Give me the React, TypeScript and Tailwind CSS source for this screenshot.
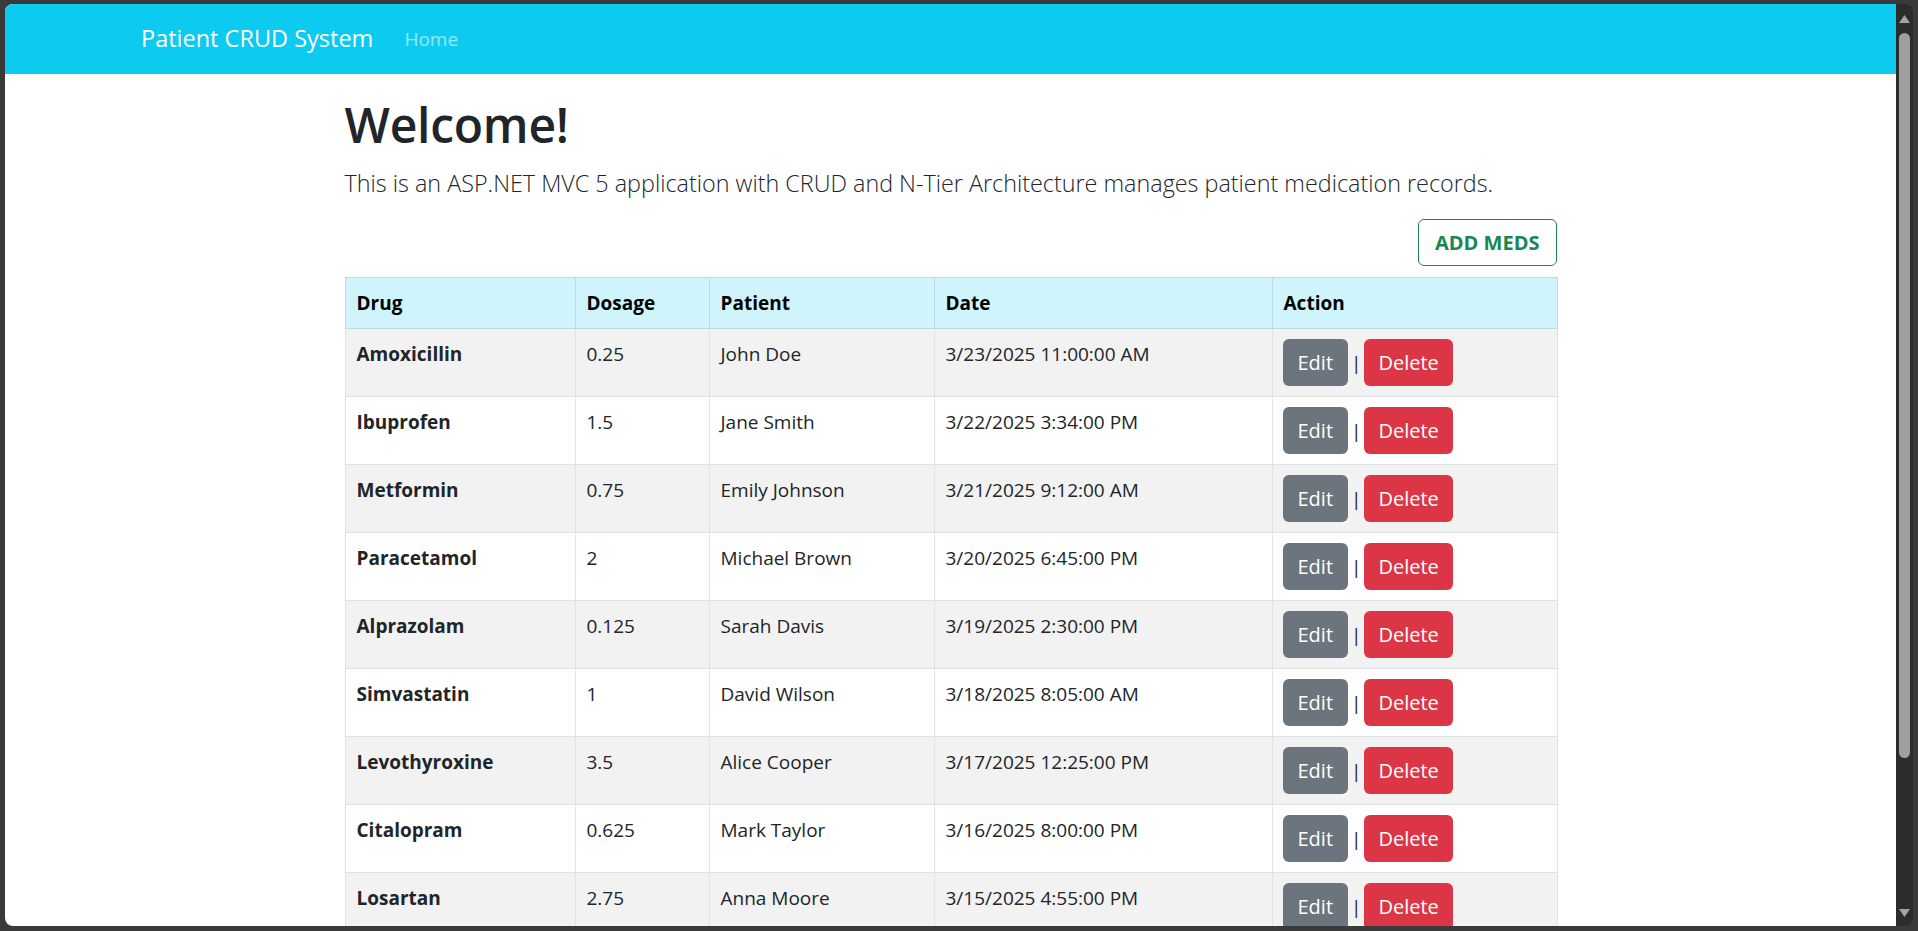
import { useState } from "react";

type Med = {
    drug: string;
    dosage: string;
    patient: string;
    date: string;
};

const meds: Med[] = [
    { drug: "Amoxicillin", dosage: "0.25", patient: "John Doe", date: "3/23/2025 11:00:00 AM" },
    { drug: "Ibuprofen", dosage: "1.5", patient: "Jane Smith", date: "3/22/2025 3:34:00 PM" },
    { drug: "Metformin", dosage: "0.75", patient: "Emily Johnson", date: "3/21/2025 9:12:00 AM" },
    { drug: "Paracetamol", dosage: "2", patient: "Michael Brown", date: "3/20/2025 6:45:00 PM" },
    { drug: "Alprazolam", dosage: "0.125", patient: "Sarah Davis", date: "3/19/2025 2:30:00 PM" },
    { drug: "Simvastatin", dosage: "1", patient: "David Wilson", date: "3/18/2025 8:05:00 AM" },
    { drug: "Levothyroxine", dosage: "3.5", patient: "Alice Cooper", date: "3/17/2025 12:25:00 PM" },
    { drug: "Citalopram", dosage: "0.625", patient: "Mark Taylor", date: "3/16/2025 8:00:00 PM" },
    { drug: "Losartan", dosage: "2.75", patient: "Anna Moore", date: "3/15/2025 4:55:00 PM" },
];

const Navbar = () => {
    return (
        <div className="h-[70px] bg-[#0dcaf0] flex items-center pl-[136px]">
            <span className="text-white text-[23.5px]">Patient CRUD System</span>
            <span className="ml-[31px] text-[19px] text-white/55">Home</span>
        </div>
    );
};

const Scrollbar = () => {
    return (
        <div className="w-[17px] bg-[#2c2c2c] rounded-r-lg flex flex-col items-center pt-[11px] pb-[9px]">
            <svg width="11" height="8" viewBox="0 0 11 8">
                <path d="M5.5 0 L11 8 L0 8 Z" fill="#a3a3a3" />
            </svg>
            <div className="mt-[10px] w-[11px] h-[725px] rounded-full bg-[#9f9f9f]" />
            <div className="flex-1" />
            <svg width="11" height="8" viewBox="0 0 11 8">
                <path d="M0 0 L11 0 L5.5 8 Z" fill="#a3a3a3" />
            </svg>
        </div>
    );
};

export default function App() {
    const [rows] = useState(meds);

    return (
        <div className="w-[1918px] h-[931px] bg-[#3a3a3a] pt-[4px] pb-[5px] px-[5px] flex font-['Open_Sans',sans-serif]">
            <div className="w-[1891px] h-full bg-white rounded-l-lg overflow-hidden">
                <Navbar />
                <div className="w-[1212px] mx-auto">
                    <h1 className="mt-[21px] text-[48px] leading-[60px] font-semibold tracking-[-0.005em] text-[#212529]">Welcome!</h1>
                    <p className="mt-[13px] text-[23.35px] leading-[30px] font-light text-[#212529]">
                        This is an ASP.NET MVC 5 application with CRUD and N-Tier Architecture manages patient medication records.
                    </p>
                    <div className="flex justify-end mt-[21px] mb-[11px]">
                        <button className="h-[47px] px-[16px] border border-[#198754] rounded-md text-[#198754] text-[20px] font-bold">
                            ADD MEDS
                        </button>
                    </div>
                    <table className="w-full table-fixed border-collapse text-[19px] leading-[30px] text-[#212529]">
                        <colgroup>
                            <col className="w-[230px]" />
                            <col className="w-[134px]" />
                            <col className="w-[225px]" />
                            <col className="w-[338px]" />
                            <col className="w-[285px]" />
                        </colgroup>
                        <thead>
                            <tr className="bg-[#cff4fc] text-black">
                                <th className="border border-[#badce3] px-[11px] py-[10px] text-left font-bold">Drug</th>
                                <th className="border border-[#badce3] px-[11px] py-[10px] text-left font-bold">Dosage</th>
                                <th className="border border-[#badce3] px-[11px] py-[10px] text-left font-bold">Patient</th>
                                <th className="border border-[#badce3] px-[11px] py-[10px] text-left font-bold">Date</th>
                                <th className="border border-[#badce3] px-[11px] py-[10px] text-left font-bold">Action</th>
                            </tr>
                        </thead>
                        <tbody>
                            {rows.map((m, i) => (
                                <tr key={m.drug} className={i % 2 === 0 ? "bg-[#f2f2f2]" : "bg-white"}>
                                    <td className="border border-[#dee2e6] px-[11px] py-[10px] align-top font-bold">{m.drug}</td>
                                    <td className="border border-[#dee2e6] px-[11px] py-[10px] align-top">{m.dosage}</td>
                                    <td className="border border-[#dee2e6] px-[11px] py-[10px] align-top">{m.patient}</td>
                                    <td className="border border-[#dee2e6] px-[11px] py-[10px] align-top">{m.date}</td>
                                    <td className="border border-[#dee2e6] px-[10px] py-[10px] align-top">
                                        <div className="flex items-center">
                                            <button className="h-[47px] px-[15px] rounded-md bg-[#6c757d] text-white text-[20px]">Edit</button>
                                            <span className="mx-[3px] text-[#212529]">|</span>
                                            <button className="h-[47px] px-[14px] rounded-md bg-[#dc3545] text-white text-[20px]">Delete</button>
                                        </div>
                                    </td>
                                </tr>
                            ))}
                        </tbody>
                    </table>
                </div>
            </div>
            <Scrollbar />
        </div>
    );
}
